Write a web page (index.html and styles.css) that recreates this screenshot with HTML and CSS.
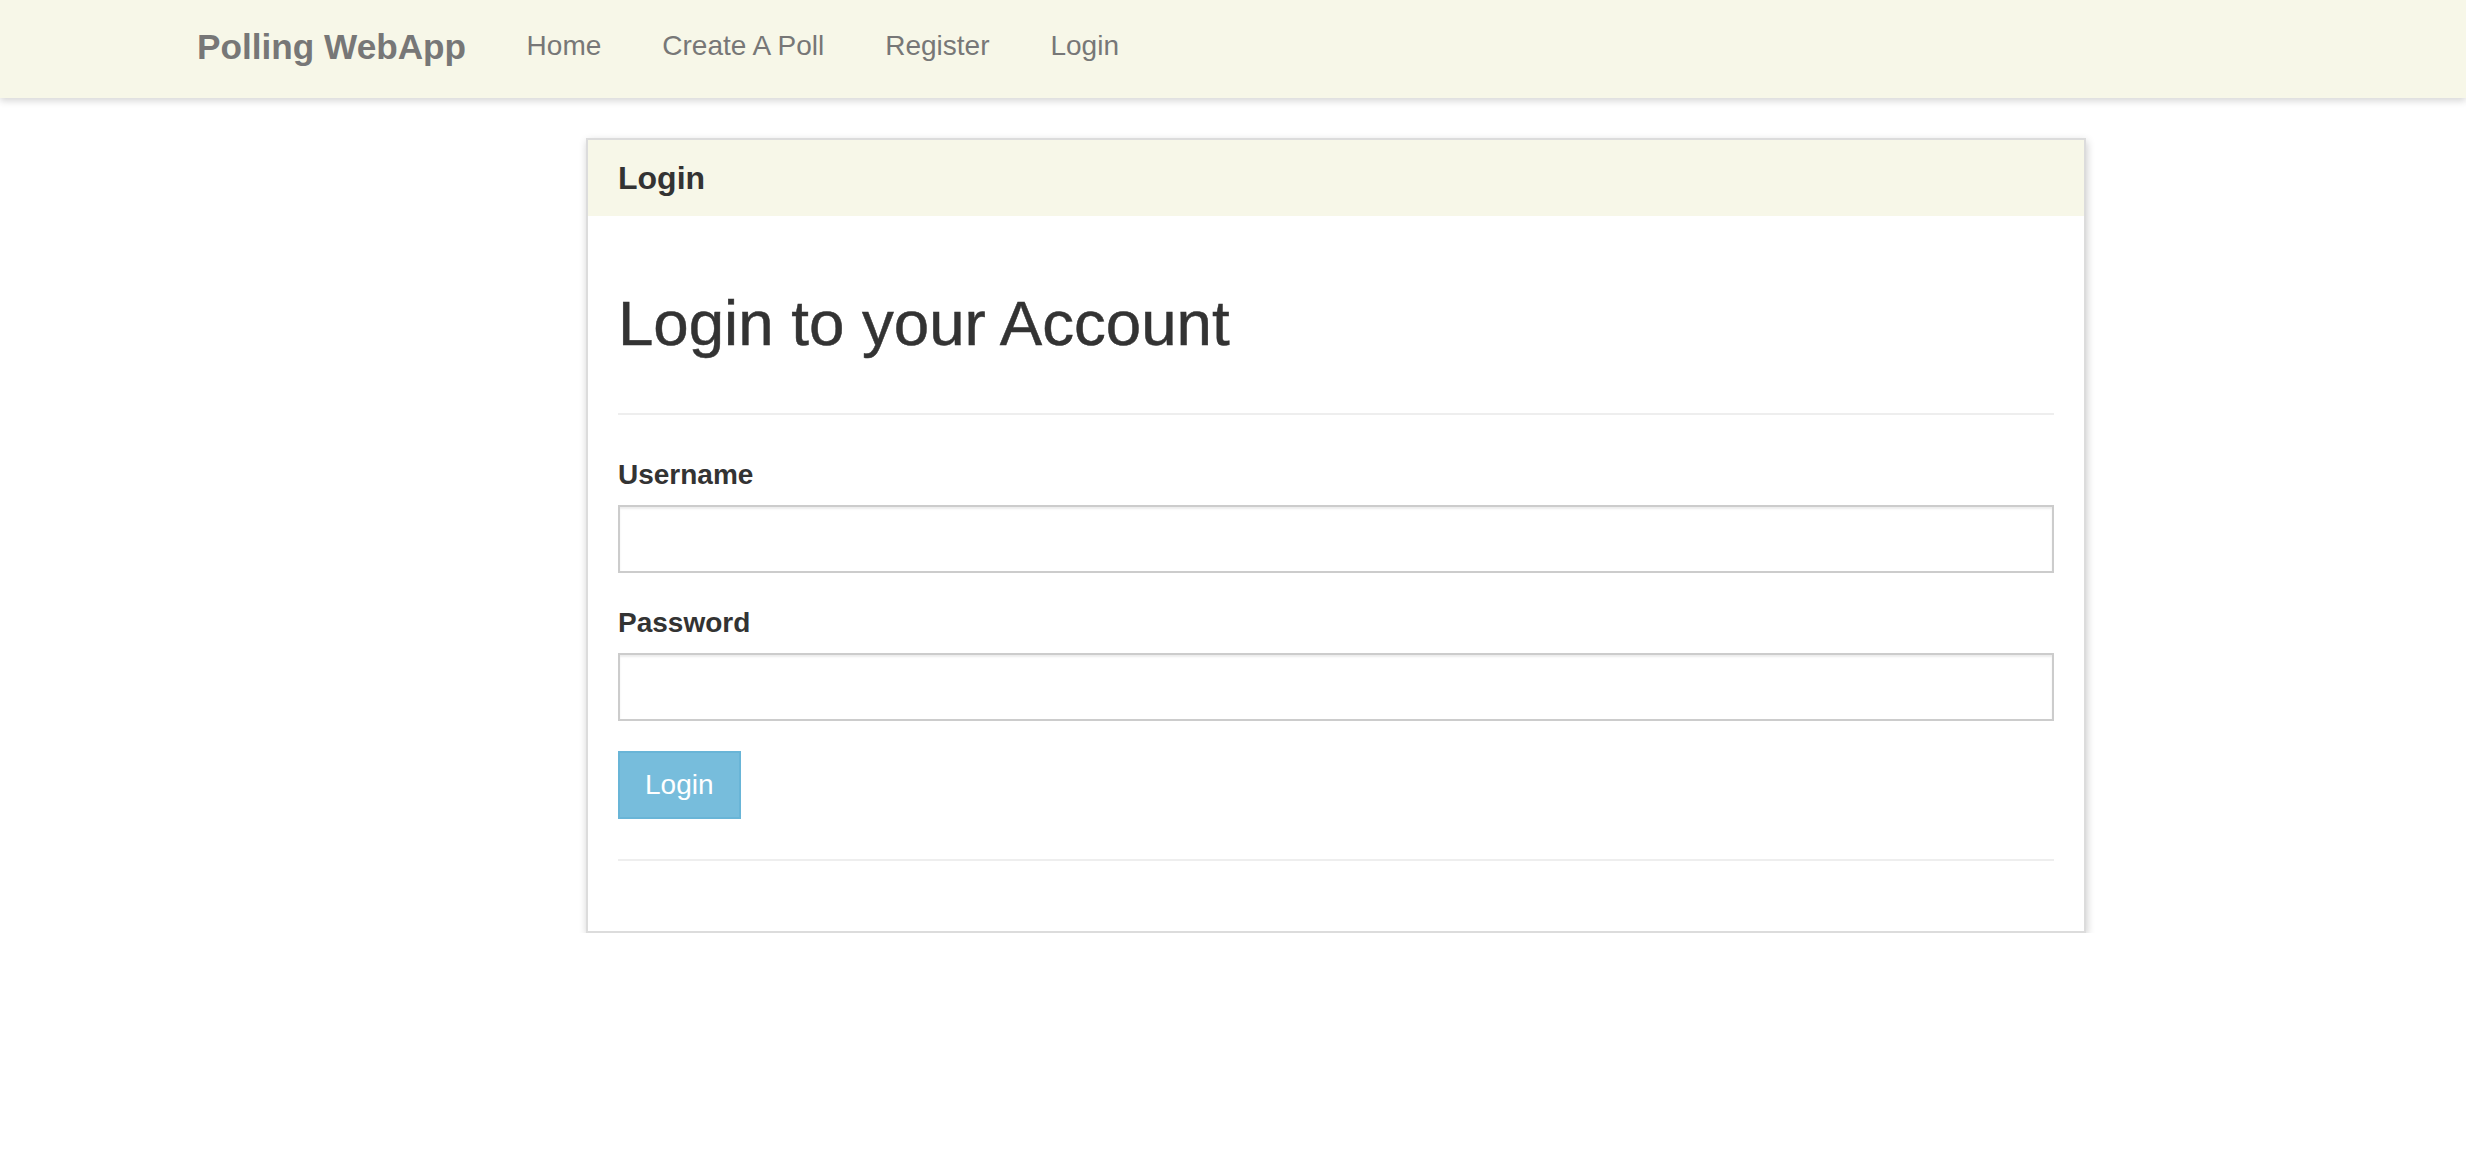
FILE: index.html
```html
<!DOCTYPE html>
<html lang="en">
<head>
<meta charset="utf-8">
<title>Polling WebApp - Login</title>
<link rel="stylesheet" href="styles.css">
</head>
<body>
<nav class="navbar">
  <div class="nav-inner">
    <a class="brand" href="#">Polling WebApp</a>
    <ul class="nav-links">
      <li><a href="#">Home</a></li>
      <li><a href="#">Create A Poll</a></li>
      <li><a href="#">Register</a></li>
      <li><a href="#">Login</a></li>
    </ul>
  </div>
</nav>
<main class="main">
  <section class="panel">
    <div class="panel-heading">
      <h3 class="panel-title">Login</h3>
    </div>
    <div class="panel-body">
      <h1 class="title">Login to your Account</h1>
      <hr class="divider">
      <form class="login-form">
        <div class="form-group">
          <label class="field-label" for="username">Username</label>
          <input class="field-input" type="text" id="username" name="username">
        </div>
        <div class="form-group">
          <label class="field-label" for="password">Password</label>
          <input class="field-input" type="password" id="password" name="password">
        </div>
        <button class="btn-login" type="submit">Login</button>
      </form>
      <hr class="divider divider-bottom">
    </div>
  </section>
</main>
</body>
</html>
```

FILE: styles.css
```css
html, body {
  margin: 0;
  padding: 0;
}

body {
  font-family: "Liberation Sans", Arial, Helvetica, sans-serif;
  color: #333;
  background: #fff;
}

.navbar {
  position: relative;
  z-index: 2;
  height: 98px;
  background: #f7f7e8;
  box-shadow: 0 3px 7px rgba(0, 0, 0, 0.16);
}

.nav-inner {
  display: flex;
  align-items: flex-start;
  padding-left: 167px;
  padding-top: 26px;
}

.brand {
  display: block;
  padding: 0 30px;
  font-size: 35.2px;
  font-weight: bold;
  line-height: 41px;
  color: #777;
  text-decoration: none;
}

.nav-links {
  display: flex;
  list-style: none;
  margin: 0;
  padding: 0;
}

.nav-links a {
  display: block;
  padding: 0 30.5px;
  font-size: 28px;
  line-height: 40px;
  color: #777;
  text-decoration: none;
}

.main {
  padding-top: 40px;
}

.panel {
  margin-left: 586px;
  width: 1500px;
  box-sizing: border-box;
  border: 2px solid #dcdcdc;
  background: #fff;
  box-shadow: 1px 3px 8px rgba(0, 0, 0, 0.2);
}

.panel-heading {
  height: 76px;
  box-sizing: border-box;
  padding: 21px 30px 0;
  background: #f7f7e8;
}

.panel-title {
  margin: 0;
  font-size: 32px;
  font-weight: bold;
  line-height: 35px;
  color: #333;
}

.panel-body {
  padding: 30px;
}

.title {
  margin: 42px 0 56px;
  font-size: 63.6px;
  font-weight: normal;
  line-height: 69px;
  color: #333;
  -webkit-text-stroke: 0.5px #333;
}

.divider {
  margin: 0 0 40px;
  border: 0;
  border-top: 2px solid #eee;
  height: 0;
}

.divider-bottom {
  margin-top: 40px;
  margin-bottom: 40px;
}

.login-form {
  margin: 0;
}

.form-group {
  margin-bottom: 30px;
}

.field-label {
  display: block;
  margin-bottom: 10px;
  font-size: 28px;
  font-weight: bold;
  line-height: 40px;
  color: #333;
}

.field-input {
  display: block;
  width: 100%;
  height: 68px;
  box-sizing: border-box;
  margin: 0;
  padding: 0 24px;
  border: 2px solid #ccc;
  border-radius: 0;
  background: #fff;
  box-shadow: inset 0 2px 2px rgba(0, 0, 0, 0.075);
  font-family: inherit;
  font-size: 28px;
  color: #555;
  outline: none;
}

.btn-login {
  display: block;
  height: 68px;
  box-sizing: border-box;
  margin: 0;
  padding: 0 25px;
  border: 2px solid #69b5d7;
  border-radius: 0;
  background: #77bddc;
  color: #fff;
  font-family: inherit;
  font-size: 28px;
  line-height: 64px;
  cursor: pointer;
}
```
